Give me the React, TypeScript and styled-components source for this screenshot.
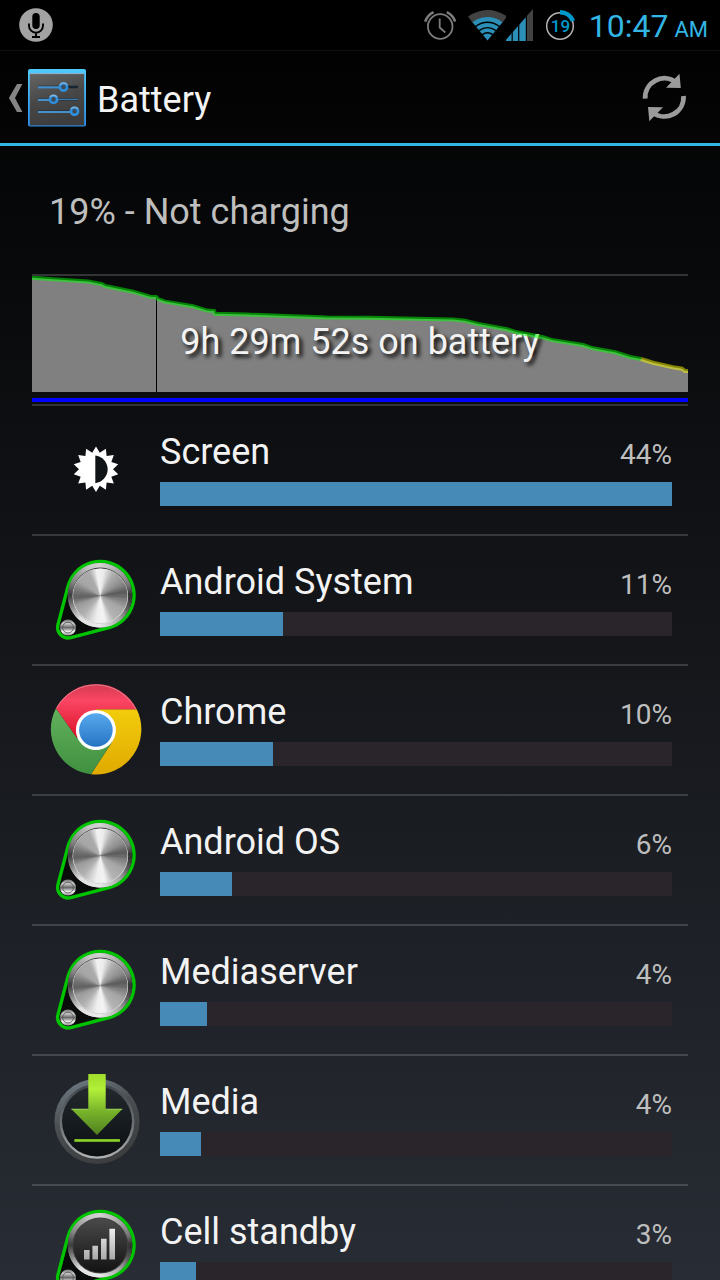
import React from "react";
import styled, { createGlobalStyle } from "styled-components";

const GlobalStyle = createGlobalStyle`
  *, *::before, *::after { box-sizing: border-box; }
  body {
    margin: 0;
    background: #000;
    font-family: Roboto, "Noto Sans", sans-serif;
  }
`;

const Screen = styled.div`
  display: flex;
  flex-direction: column;
  height: 100vh;
  overflow: hidden;
  color: #f3f3f3;
  background: linear-gradient(#000, #282c34);
`;

const StatusBar = styled.div`
  display: flex;
  flex: none;
  align-items: center;
  justify-content: space-between;
  height: 51px;
  padding: 0 12px 0 19px;
  background: #000;
  border-bottom: 1px solid #101010;
`;

const StatusIcons = styled.div`
  display: flex;
  align-items: center;
  gap: 12px;
`;

const Reception = styled.div`
  display: flex;
`;

const Clock = styled.time`
  display: flex;
  align-items: baseline;
  gap: 6px;
  padding: 2px 0 0 2px;
  color: #33b5e5;
  font-size: 32px;
  line-height: 40px;
  white-space: nowrap;
`;

const Meridiem = styled.span`
  font-size: 22px;
  line-height: 24px;
`;

const ActionBar = styled.header`
  display: flex;
  flex: none;
  align-items: center;
  height: 95px;
  padding: 2px 32px 0 8px;
  border-bottom: 3px solid #33b5e5;
`;

const IconButton = styled.button`
  display: flex;
  align-items: center;
  gap: 5px;
  padding: 0;
  border: 0;
  background: none;
  cursor: pointer;
`;

const Title = styled.h1`
  flex: 1;
  margin: 0;
  padding: 4px 0 0 11px;
  font-size: 36px;
  font-weight: 400;
  line-height: 44px;
`;

const Content = styled.main`
  flex: 1;
  min-height: 0;
  padding: 0 32px;
  overflow-y: auto;
  scrollbar-width: none;
`;

const Summary = styled.p`
  display: flex;
  align-items: center;
  height: 128px;
  margin: 0;
  padding: 4px 17px 0;
  color: #bebebe;
  font-size: 36px;
  line-height: 44px;
`;

const History = styled.section`
  display: grid;
  height: 130px;
  border-top: 2px solid #323436;

  > * {
    grid-area: 1 / 1;
  }
`;

const HistorySvg = styled.svg`
  display: block;
  width: 100%;
  height: 128px;
`;

const HistoryLabel = styled.p`
  margin: 0;
  padding-top: 44px;
  text-align: center;
  font-size: 36px;
  line-height: 44px;
  text-shadow: 3px 3px 4px #000;
`;

const UsageList = styled.ul`
  margin: 0;
  padding: 0;
  list-style: none;
`;

const UsageRow = styled.li`
  display: grid;
  grid-template-columns: 128px 1fr;
  align-items: center;
  height: 130px;
  padding-right: 16px;
  border-top: 2px solid rgba(255, 255, 255, 0.16);
`;

const IconSlot = styled.div`
  display: flex;
  justify-content: center;
`;

const Usage = styled.div`
  display: grid;
  gap: 8px;
  padding-bottom: 4px;
`;

const UsageHead = styled.div`
  display: flex;
  align-items: baseline;
  justify-content: space-between;
`;

const AppName = styled.span`
  font-size: 36px;
  line-height: 44px;
`;

const Percent = styled.span`
  color: #bebebe;
  font-size: 28px;
  line-height: 32px;
`;

const Meter = styled.progress`
  display: block;
  width: 100%;
  height: 24px;
  border: 0;
  appearance: none;
  background: #29252b;

  &::-webkit-progress-bar {
    background: #29252b;
  }
  &::-webkit-progress-value {
    background: #468ab7;
  }
  &::-moz-progress-bar {
    background: #468ab7;
  }
`;

const MicIcon = () => (
  <svg width="34" height="34" viewBox="0 0 34 34" aria-hidden="true">
    <circle cx="17" cy="17" r="16.8" fill="#a3a3a3" />
    <rect x="13.3" y="5" width="7.4" height="16" rx="3.7" />
    <path d="M10 15.5v2.2a7 7 0 0 0 14 0v-2.2M17 25v4M13 29h8" fill="none" stroke="#000" strokeWidth="1.9" />
  </svg>
);

const AlarmIcon = () => (
  <svg width="32" height="32" viewBox="0 0 32 32" fill="none" stroke="#7c7c7c" strokeWidth="1.8" aria-hidden="true">
    <circle cx="16.2" cy="17.5" r="12.3" />
    <path d="M15.7 9.5v9l5.6 5" />
    <path d="M1.2 12.6A16.5 16.5 0 0 1 9.6 3.2M31.2 12.6A16.5 16.5 0 0 0 22.8 3.2" strokeWidth="2.6" />
  </svg>
);

const WifiIcon = () => (
  <svg width="38" height="32" viewBox="0 0 38 32" aria-hidden="true">
    <path d="M0 7.5Q19.5-5.5 39 7.5L34.6 13.4Q19.5 3.5 4.4 13.4Z" fill="#424242" />
    <path d="M4.4 13.2Q19.5 3 34.6 13.2L19.5 31.5Z" fill="#2b8fb8" />
    <g fill="none" stroke="#000" strokeWidth="1.4">
      <path d="M7.4 17.6Q19.5 9 31.6 17.6" />
      <path d="M11 21.6Q19.5 15.6 28 21.6" />
      <path d="M14.2 25.6Q19.5 22 24.8 25.6" />
    </g>
  </svg>
);

const SignalIcon = () => (
  <svg width="28" height="32" viewBox="0 0 28 32" aria-hidden="true">
    <path d="M21 6.5 27 0V32H21Z" fill="#424242" />
    <path d="M-1 32 20 8V32Z" fill="#2b8fb8" />
    <path d="M6.2 20v12M12.7 14v18M20.4 6v26" stroke="#000" strokeWidth="1.2" />
  </svg>
);

const BatteryRing = () => (
  <svg width="29" height="32" viewBox="1 0 29 32" role="img" aria-label="Battery 19 percent">
    <circle cx="15" cy="17" r="13.3" fill="none" stroke="#b4b4b4" strokeWidth="1.5" />
    <path d="M15 3.2A13.8 13.8 0 0 1 27.9 12" fill="none" stroke="#0099cc" strokeWidth="4.6" />
    <text x="15.4" y="23" textAnchor="middle" fill="#0099cc" fontSize="17" fontWeight="500">19</text>
  </svg>
);

const BackIcon = () => (
  <svg width="15" height="30" viewBox="0 0 15 30" aria-hidden="true">
    <path d="M9 1h5.4L7 15l7.4 14H9L.9 15Z" fill="#858585" />
  </svg>
);

const SettingsIcon = () => (
  <svg width="58" height="58" viewBox="0 0 58 58" aria-hidden="true">
    <defs>
      <linearGradient id="panel" x2="0.3" y2="1">
        <stop stopColor="#666" />
        <stop offset="0.55" stopColor="#474747" />
        <stop offset="1" stopColor="#3d3d3d" />
      </linearGradient>
      <linearGradient id="edge" x2="0" y2="1">
        <stop stopColor="#4fcbff" />
        <stop offset="1" stopColor="#2b8fe8" />
      </linearGradient>
    </defs>
    <rect width="58" height="57.6" rx="2" fill="url(#edge)" />
    <rect x="1.8" y="4.4" width="54.4" height="52" fill="url(#panel)" />
    <path d="M1.8 4.6h54.4" stroke="#91b7c7" />
    <g stroke="#182430" strokeWidth="2.4">
      <path d="M10 18h40M10 30.4h40M10 42.6h40" />
    </g>
    <g stroke="#4590cb" strokeWidth="2.2">
      <path d="M10 18.4h22M10 30.8h12M10 43h33" />
    </g>
    <path d="M29 30.4h21" stroke="#3c78ac" strokeWidth="1.4" />
    <g fill="#3d4a55" stroke="#2f8fdc" strokeWidth="2.6">
      <circle cx="35.5" cy="18" r="3.6" />
      <circle cx="25.5" cy="30.4" r="3.6" />
      <circle cx="46.5" cy="42.3" r="3.6" />
    </g>
    <path d="M32 15.6a4.4 4.4 0 0 1 7 0M22 28a4.4 4.4 0 0 1 7 0M43 39.9a4.4 4.4 0 0 1 7 0" fill="none" stroke="#8bb4d4" strokeWidth="1.4" />
  </svg>
);

const RefreshIcon = () => (
  <svg width="48" height="50" viewBox="0 0 48 50" aria-hidden="true">
    <g fill="none" stroke="#9b9b9b" strokeWidth="4.8">
      <path d="M5.2 25.6A19.2 19.2 0 0 1 36 9.2" />
      <path d="M43.5 23A19.2 19.2 0 0 1 12.8 39.6" />
    </g>
    <path d="M39.5.8 40.8 15 26 14.7ZM9.3 48.3 8 34 23 34.3Z" fill="#9b9b9b" />
  </svg>
);

const ScreenIcon = () => {
  const points = Array.from({ length: 28 }, (_, i) => {
    const angle = (i * Math.PI) / 14;
    const radius = i % 2 ? 17 : 22.8;
    return `${46 + radius * Math.sin(angle)},${45.3 - radius * Math.cos(angle)}`;
  }).join(" ");
  return (
    <svg width="92" height="92" viewBox="0 0 92 92" aria-hidden="true">
      <polygon points={points} fill="#fff" />
      <path d="M45.3 31.4A14 14 0 0 1 45.3 59.2Z" fill="#111417" />
    </svg>
  );
};

type Stop = [angle: number, lightness: number];

/* Brightness round each metal surface, clockwise in degrees from the right. */
const DISC: Stop[] = [[0, 110], [30, 165], [60, 180], [80, 244], [100, 238], [130, 180], [158, 155], [176, 95], [188, 110], [215, 165], [245, 172], [262, 242], [278, 235], [300, 175], [330, 140], [352, 88], [360, 110]];
const RIM: Stop[] = [[0, 45], [25, 90], [50, 165], [90, 235], [130, 225], [160, 130], [180, 60], [205, 130], [250, 200], [270, 210], [310, 165], [340, 120], [360, 45]];

const lightnessAt = (stops: Stop[], angle: number) => {
  const next = Math.max(1, stops.findIndex(([a]) => a >= angle));
  const [a0, v0] = stops[next - 1];
  const [a1, v1] = stops[next];
  return Math.round(v0 + ((angle - a0) / (a1 - a0)) * (v1 - v0));
};

const Metal = ({ cx, cy, r, stops }: { cx: number; cy: number; r: number; stops: Stop[] }) => (
  <g>
    {Array.from({ length: 90 }, (_, i) => {
      const at = (deg: number) => {
        const rad = (deg * Math.PI) / 180;
        return `${(cx + r * Math.cos(rad)).toFixed(2)} ${(cy + r * Math.sin(rad)).toFixed(2)}`;
      };
      const v = lightnessAt(stops, i * 4 + 2);
      return <path key={i} d={`M${cx} ${cy}L${at(i * 4)}L${at(i * 4 + 8)}Z`} fill={`rgb(${v},${v},${v})`} />;
    })}
  </g>
);

const KnobIcon = ({ signal = false }: { signal?: boolean }) => (
  <svg width="92" height="92" viewBox="0 0 92 92" aria-hidden="true">
    <defs>
      <linearGradient id="dark-disc" x2="0" y2="1">
        <stop stopColor="#4a4a4a" />
        <stop offset="1" stopColor="#121212" />
      </linearGradient>
      <linearGradient id="bars" x2="0" y2="1">
        <stop stopColor="#eee" />
        <stop offset="1" stopColor="#aaa" />
      </linearGradient>
      <linearGradient id="small-knob" x2="0" y2="1">
        <stop stopColor="#777" />
        <stop offset="0.25" stopColor="#c8c8c8" />
        <stop offset="0.5" stopColor="#6a6a6a" />
        <stop offset="0.75" stopColor="#eee" />
        <stop offset="1" stopColor="#999" />
      </linearGradient>
    </defs>
    <path
      d="M17.9 32.7A33.6 33.6 0 1 1 60 73.3L20.8 83.6A10.5 10.5 0 0 1 7.8 71.4Z"
      fill="#0a0c0c"
      stroke="#00c400"
      strokeWidth="3.4"
    />
    <Metal cx={50} cy={41.3} r={32.2} stops={RIM} />
    <circle cx="50.3" cy="41.6" r="28" fill="#404040" />
    {signal ? (
      <>
        <circle cx="50.3" cy="41.6" r="27" fill="url(#dark-disc)" />
        <path d="M34 46h5.6v9.5H34ZM42.4 41.8H48v13.7h-5.6ZM51 34.8h5.6v20.7H51ZM59.4 24.8H65v30.7h-5.6Z" fill="url(#bars)" />
      </>
    ) : (
      <>
        <circle cx="50.3" cy="42.2" r="27.8" fill="#ddd" />
        <Metal cx={50.3} cy={41.8} r={27} stops={DISC} />
      </>
    )}
    <circle cx="18" cy="73.6" r="8" fill="url(#small-knob)" />
    <circle cx="18" cy="73.6" r="5.4" fill="none" stroke="#555" strokeWidth="0.8" />
  </svg>
);

const ChromeIcon = () => (
  <svg width="92" height="92" viewBox="0 0 92 92" aria-hidden="true">
    <defs>
      <linearGradient id="red" x2="0" y2="1">
        <stop stopColor="#d23a50" />
        <stop offset="0.3" stopColor="#fa4664" />
        <stop offset="1" stopColor="#dc1228" />
      </linearGradient>
      <linearGradient id="green" x2="0" y2="1">
        <stop stopColor="#62b05c" />
        <stop offset="1" stopColor="#3f9040" />
      </linearGradient>
      <linearGradient id="yellow" x2="0" y2="1">
        <stop stopColor="#f2cc0c" />
        <stop offset="1" stopColor="#e0aa00" />
      </linearGradient>
      <linearGradient id="blue" x2="0" y2="1">
        <stop stopColor="#59a9ee" />
        <stop offset="1" stopColor="#2474c4" />
      </linearGradient>
    </defs>
    <path d="M86.7 25.3A45.3 45.3 0 0 1 41 90.3L62 58 46 46V25.3Z" fill="url(#yellow)" />
    <path d="M6 24.3A45.3 45.3 0 0 0 41 90.3L62 58 46 46 27 54Z" fill="url(#green)" />
    <path d="M6 24.3A45.3 45.3 0 0 1 86.7 25.3H46V46L27 54Z" fill="url(#red)" />
    <path d="M6.6 24A45 45 0 0 1 85.7 25" fill="none" stroke="#e58b96" strokeWidth="0.8" />
    <circle cx="45.9" cy="46" r="20" fill="#fff" />
    <circle cx="45.9" cy="46" r="16.8" fill="url(#blue)" />
  </svg>
);

const DownloadIcon = () => (
  <svg width="92" height="92" viewBox="0 0 92 92" aria-hidden="true">
    <defs>
      <linearGradient id="ring" x2="0.4" y2="1">
        <stop stopColor="#74818c" />
        <stop offset="0.5" stopColor="#4b4f52" />
        <stop offset="1" stopColor="#3c3e40" />
      </linearGradient>
      <linearGradient id="ring-inner" x2="0" y2="1">
        <stop stopColor="#3d4348" />
        <stop offset="0.6" stopColor="#74787b" />
        <stop offset="1" stopColor="#b2b4b5" />
      </linearGradient>
      <linearGradient id="well" x2="0" y2="1">
        <stop stopColor="#22282d" />
        <stop offset="1" stopColor="#0c1013" />
      </linearGradient>
      <linearGradient id="arrow" x2="0" y2="1">
        <stop stopColor="#9fdc2c" />
        <stop offset="0.25" stopColor="#b2f03a" />
        <stop offset="0.6" stopColor="#79b52b" />
        <stop offset="1" stopColor="#51801f" />
      </linearGradient>
    </defs>
    <circle cx="47" cy="47.4" r="42.6" fill="url(#ring)" />
    <circle cx="47" cy="47.4" r="37.4" fill="url(#ring-inner)" />
    <circle cx="47" cy="47.4" r="35" fill="url(#well)" />
    <path d="M38.3 0H55.7V35H72.3L47 61 21.3 35H38.3Z" fill="url(#arrow)" />
    <path d="M21.3 35.2H38.3M55.7 35.2H72.3" stroke="#a5d86a" strokeWidth="0.8" />
    <path d="M24.3 66.5H70" stroke="#6fae1f" strokeWidth="3" />
    <path d="M25 66.2H69.4" stroke="#9bdc3a" strokeWidth="1" />
  </svg>
);

const GREEN_LINE =
  "0,1.7 21,3.2 56,5.5 70,8.2 73,10 101,15.7 118,20.7 124,21 126,23 133,25.6 161,30.3 175,34.6 182,35 183,37.7 215,38.6 248,39.8 295,41.4 338,41.7 421,43.4 433,44.8 446,48 475,53.3 485,56.3 511,61.3 521,64.3 551,69 561,72.3 583,76.3 598,81 609,83";
const YELLOW_LINE = "609,83 621,86.7 641,91.3 650,92.7 653,95 656,95";

const BatteryHistory = () => (
  <History>
    <HistorySvg viewBox="0 0 656 128" preserveAspectRatio="none" aria-hidden="true">
      <polygon points={`0,116 ${GREEN_LINE} ${YELLOW_LINE} 656,116`} fill="#808080" />
      <rect x="124" y="22" width="1" height="94" fill="#000" />
      <rect y="122" width="656" height="4" fill="#00f" />
    </HistorySvg>
    <HistoryLabel>9h 29m 52s on battery</HistoryLabel>
    <HistorySvg viewBox="0 0 656 128" preserveAspectRatio="none" aria-hidden="true">
      <g fill="none" strokeWidth="4" strokeOpacity="0.5">
        <polyline points={GREEN_LINE} stroke="#0f0" />
        <polyline points={YELLOW_LINE} stroke="#ff0" />
      </g>
    </HistorySvg>
  </History>
);

const usage = [
  { name: "Screen", percent: 44, fill: 100, icon: <ScreenIcon /> },
  { name: "Android System", percent: 11, fill: 24, icon: <KnobIcon /> },
  { name: "Chrome", percent: 10, fill: 22, icon: <ChromeIcon /> },
  { name: "Android OS", percent: 6, fill: 14, icon: <KnobIcon /> },
  { name: "Mediaserver", percent: 4, fill: 9.2, icon: <KnobIcon /> },
  { name: "Media", percent: 4, fill: 8, icon: <DownloadIcon /> },
  { name: "Cell standby", percent: 3, fill: 7, icon: <KnobIcon signal /> },
];

export default function App() {
  return (
    <Screen>
      <GlobalStyle />
      <StatusBar>
        <MicIcon />
        <StatusIcons>
          <AlarmIcon />
          <Reception>
            <WifiIcon />
            <SignalIcon />
          </Reception>
          <BatteryRing />
          <Clock>
            10:47 <Meridiem>AM</Meridiem>
          </Clock>
        </StatusIcons>
      </StatusBar>
      <ActionBar>
        <IconButton type="button" aria-label="Back to settings">
          <BackIcon />
          <SettingsIcon />
        </IconButton>
        <Title>Battery</Title>
        <IconButton type="button" aria-label="Refresh">
          <RefreshIcon />
        </IconButton>
      </ActionBar>
      <Content>
        <Summary>19% - Not charging</Summary>
        <BatteryHistory />
        <UsageList>
          {usage.map(({ name, percent, fill, icon }) => (
            <UsageRow key={name}>
              <IconSlot>{icon}</IconSlot>
              <Usage>
                <UsageHead>
                  <AppName>{name}</AppName>
                  <Percent>{percent}%</Percent>
                </UsageHead>
                <Meter aria-label={name} max={100} value={fill} />
              </Usage>
            </UsageRow>
          ))}
        </UsageList>
      </Content>
    </Screen>
  );
}
